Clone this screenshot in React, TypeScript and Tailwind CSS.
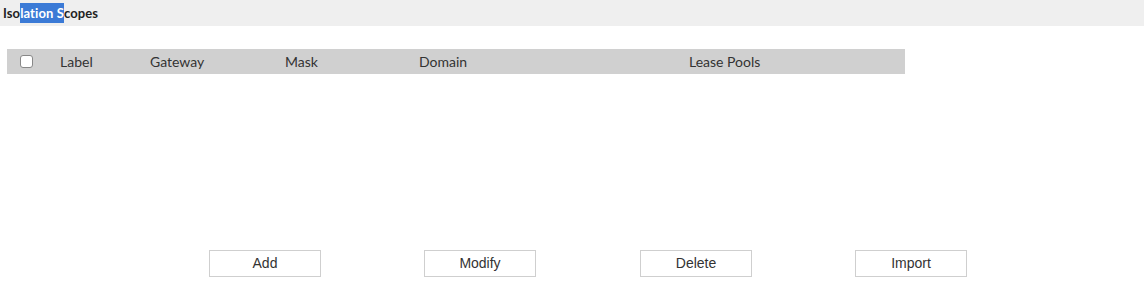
export default function App() {
  const font = { fontFamily: "Lato, 'Liberation Sans', sans-serif" };
  const btns = [
    { t: "Add", m: "ml-0" },
    { t: "Modify", m: "ml-[103px]" },
    { t: "Delete", m: "ml-[104px]" },
    { t: "Import", m: "ml-[103px]" },
  ];
  return (
    <div className="w-[1144px] h-[294px] bg-white flex flex-col" style={font}>
      <div className="h-[26px] bg-[#efefef] flex items-center pl-[3px]">
        <span className="text-[13px] font-bold text-[#222] leading-none tracking-[0.1px]">
          Iso<span className="bg-[#3b7ad6] text-white py-[2px]">lation S</span>copes
        </span>
      </div>
      <div className="mt-[23px] ml-[7px] w-[898px] h-[25px] bg-[#d0d0d0] flex items-center text-[14px] text-[#333]">
        <div className="w-[13px] h-[13px] ml-[13px] bg-white border border-[#888] rounded-[3px]" />
        <span className="ml-[27px] w-[90px]">Label</span>
        <span className="w-[135px]">Gateway</span>
        <span className="w-[134px]">Mask</span>
        <span className="w-[270px]">Domain</span>
        <span>Lease Pools</span>
      </div>
      <div className="mt-[176px] ml-[209px] flex">
        {btns.map((b) => (
          <button
            key={b.t}
            className={`${b.m} w-[112px] h-[27px] border border-[#cfcfcf] bg-white text-[14px] text-[#333] flex items-center justify-center`}
            style={{ fontFamily: "'Liberation Sans', Arial, sans-serif" }}
          >
            {b.t}
          </button>
        ))}
      </div>
    </div>
  );
}
